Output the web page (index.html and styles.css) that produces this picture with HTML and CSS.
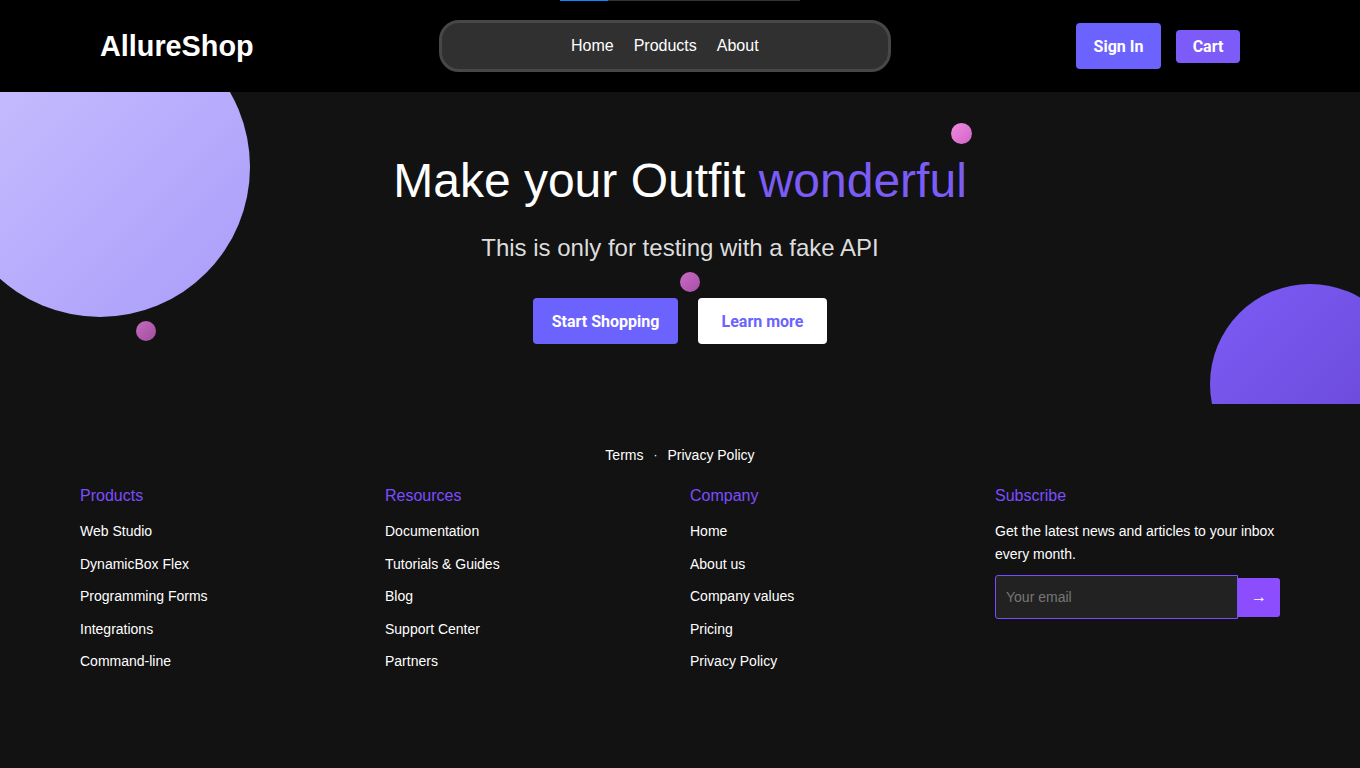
FILE: index.html
```html
<!DOCTYPE html>
<html lang="en">
<head>
<meta charset="utf-8">
<title>AllureShop</title>
<link rel="stylesheet" href="styles.css">
</head>
<body>
<div class="progress"><div class="progress-fill"></div></div>
<header class="header">
  <div class="logo">AllureShop</div>
  <nav class="nav">
    <a href="#">Home</a>
    <a href="#">Products</a>
    <a href="#">About</a>
  </nav>
  <div class="actions">
    <button class="btn-signin">Sign In</button>
    <button class="btn-cart">Cart</button>
  </div>
</header>
<section class="hero">
  <div class="blob blob-big"></div>
  <div class="blob blob-right"></div>
  <div class="dot dot-a"></div>
  <div class="dot dot-b"></div>
  <div class="dot dot-c"></div>
  <h1 class="hero-title">Make your Outfit <span class="accent">wonderful</span></h1>
  <p class="hero-sub">This is only for testing with a fake API</p>
  <div class="hero-buttons">
    <button class="btn-primary">Start Shopping</button>
    <button class="btn-secondary">Learn more</button>
  </div>
</section>
<footer class="footer">
  <div class="legal"><a href="#">Terms</a><span class="sep">·</span><a href="#">Privacy Policy</a></div>
  <div class="columns">
    <div class="col">
      <h3>Products</h3>
      <ul>
        <li>Web Studio</li>
        <li>DynamicBox Flex</li>
        <li>Programming Forms</li>
        <li>Integrations</li>
        <li>Command-line</li>
      </ul>
    </div>
    <div class="col">
      <h3>Resources</h3>
      <ul>
        <li>Documentation</li>
        <li>Tutorials &amp; Guides</li>
        <li>Blog</li>
        <li>Support Center</li>
        <li>Partners</li>
      </ul>
    </div>
    <div class="col">
      <h3>Company</h3>
      <ul>
        <li>Home</li>
        <li>About us</li>
        <li>Company values</li>
        <li>Pricing</li>
        <li>Privacy Policy</li>
      </ul>
    </div>
    <div class="col">
      <h3>Subscribe</h3>
      <p class="sub-text">Get the latest news and articles to your inbox every month.</p>
      <form class="sub-form">
        <input type="email" placeholder="Your email">
        <button type="button">→</button>
      </form>
    </div>
  </div>
</footer>
</body>
</html>
```

FILE: styles.css
```css
* { box-sizing: border-box; }
html, body { margin: 0; padding: 0; }
body {
  background: #121212;
  color: #fff;
  font-family: "Liberation Sans", Arial, sans-serif;
  min-height: 768px;
  position: relative;
}
a { color: inherit; text-decoration: none; }
button { font-family: inherit; border: none; cursor: pointer; }

.progress {
  position: absolute;
  top: 0;
  left: 560px;
  width: 240px;
  height: 1px;
  background: #333;
  z-index: 10;
}
.progress-fill { width: 48px; height: 100%; background: #0a84ff; }

.header {
  height: 92px;
  background: #000;
  display: flex;
  align-items: center;
  justify-content: space-between;
  padding: 0 120px 0 100px;
}
.logo {
  font-size: 28.8px;
  font-weight: 700;
  color: #fff;
}
.nav {
  width: 452px;
  height: 52px;
  background: #303030;
  border: 3px solid #474747;
  border-radius: 20px;
  display: flex;
  align-items: center;
  justify-content: center;
  gap: 20px;
  font-size: 16px;
}
.nav a { color: #fff; }
.actions { display: flex; align-items: center; gap: 15px; }
.btn-signin, .btn-cart {
  font-family: Roboto, "Liberation Sans", sans-serif;
  font-weight: 700;
  font-size: 16px;
  color: #fff;
  border-radius: 4px;
}
.btn-signin { background: #6c63ff; height: 46px; width: 85px; padding: 0; }
.btn-cart { background: #7d5bf9; height: 33px; width: 64px; padding: 0; }

.hero {
  position: relative;
  overflow: hidden;
  height: 312px;
  padding-top: 60px;
  display: flex;
  flex-direction: column;
  align-items: center;
}
.blob, .dot { position: absolute; border-radius: 50%; }
.blob-big {
  width: 300px; height: 300px;
  left: -50px; top: -75px;
  background: linear-gradient(135deg, #cbc2ff 0%, #a99cfa 100%);
}
.blob-right {
  width: 200px; height: 200px;
  left: 1210px; top: 192px;
  background: linear-gradient(135deg, #7d5cf6 0%, #6544d2 100%);
}
.dot { width: 20px; height: 20px; }
.dot-a { left: 136px; top: 229px; background: linear-gradient(135deg, #c46bc0, #a24e9d); }
.dot-b { left: 951px; top: 31px; width: 21px; height: 21px; background: linear-gradient(135deg, #f08ce0, #d263c7); }
.dot-c { left: 680px; top: 180px; background: linear-gradient(135deg, #c86ac4, #a84fa6); }

.hero-title {
  position: relative;
  margin: 0;
  font-size: 48px;
  line-height: 58px;
  font-weight: 400;
  color: #fff;
}
.accent { color: #7b5cf5; }
.hero-sub {
  position: relative;
  margin: 24px 0 0;
  font-size: 24px;
  color: #ddd;
}
.hero-buttons {
  position: relative;
  display: flex;
  gap: 20px;
  margin-top: 36px;
}
.btn-primary, .btn-secondary {
  font-family: Roboto, "Liberation Sans", sans-serif;
  font-weight: 700;
  font-size: 16px;
  height: 46px;
  padding: 0;
  border-radius: 4px;
}
.btn-primary { background: #6c63ff; color: #fff; width: 145px; }
.btn-secondary { background: #fff; color: #6c63ff; width: 129px; }

.footer {
  padding: 43px 80px 0;
}
.legal {
  display: flex;
  justify-content: center;
  align-items: center;
  gap: 10px;
  font-size: 14px;
  line-height: 16px;
}
.sep { font-size: 12px; }
.columns {
  display: grid;
  grid-template-columns: repeat(4, 285px);
  gap: 20px;
  margin-top: 23px;
}
.col h3 {
  margin: 0;
  font-size: 16px;
  font-weight: 400;
  line-height: 20px;
  color: #7c4dff;
}
.col ul { list-style: none; margin: 9px 0 0; padding: 0; }
.col li { font-size: 14px; line-height: 32.5px; color: #fff; }
.sub-text {
  margin: 14px 0 0;
  font-size: 14px;
  line-height: 23px;
}
.sub-form { display: flex; align-items: center; margin-top: 9px; }
.sub-form input {
  width: 243px;
  height: 44px;
  background: #222;
  border: 1px solid #7c4dff;
  border-radius: 3px 0 0 3px;
  color: #fff;
  padding: 0 10px;
  font-family: inherit;
  font-size: 14px;
  outline: none;
}
.sub-form input::placeholder { color: #777; }
.sub-form button {
  width: 42px;
  height: 39px;
  background: #8c4dff;
  color: #fff;
  font-size: 16px;
  border-radius: 0 3px 3px 0;
}
```
